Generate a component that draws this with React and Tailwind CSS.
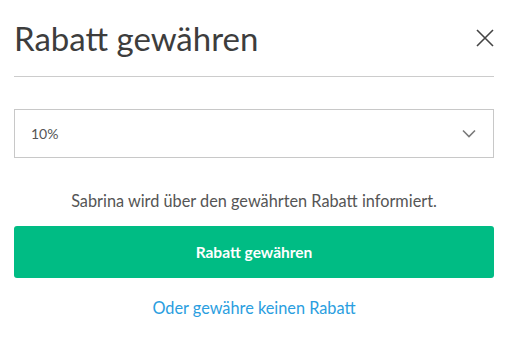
import React, { useState } from "react";

const rabattOptionen = ["5%", "10%", "15%", "20%"];

function App() {
  const [rabatt, setRabatt] = useState("10%");

  return (
    <div className="w-[513px] h-[359px] bg-white pl-[14px] pr-[19px] font-['Lato',sans-serif]">
      {/* Kopfzeile */}
      <div className="flex items-center justify-between h-[77px] border-b border-[#cccccc]">
        <h2 className="text-[33px] text-[#3d3d3d] leading-none">
          Rabatt gewähren
        </h2>
        <button className="w-[18px] h-[18px] text-[#444444]">
          <svg viewBox="0 0 18 18" width="18" height="18">
            <path
              d="M1 1 L17 17 M17 1 L1 17"
              stroke="currentColor"
              strokeWidth="1.6"
              fill="none"
            />
          </svg>
        </button>
      </div>

      {/* Auswahl */}
      <div className="relative mt-[32px]">
        <select
          value={rabatt}
          onChange={(e) => setRabatt(e.target.value)}
          className="appearance-none w-full h-[49px] border border-[#c8c8c8] bg-white pl-[16px] text-[14px] text-[#555555] outline-none"
        >
          {rabattOptionen.map((o) => (
            <option key={o} value={o}>
              {o}
            </option>
          ))}
        </select>
        <svg
          className="absolute right-[18px] top-[20px] pointer-events-none"
          width="14"
          height="9"
          viewBox="0 0 14 9"
        >
          <path
            d="M1 1.5 L7 7.5 L13 1.5"
            stroke="#7a7a7a"
            strokeWidth="1.6"
            fill="none"
          />
        </svg>
      </div>

      <p className="mt-[31px] text-center text-[16.3px] text-[#555555]">
        Sabrina wird über den gewährten Rabatt informiert.
      </p>

      <button className="mt-[13px] w-full h-[52px] rounded-[3px] bg-[#00bc84] text-white text-[15.5px] font-bold">
        Rabatt gewähren
      </button>

      <div className="mt-[18px] text-center">
        <a href="#" className="text-[16.3px] text-[#2a9ee0]">
          Oder gewähre keinen Rabatt
        </a>
      </div>
    </div>
  );
}

export default App;
